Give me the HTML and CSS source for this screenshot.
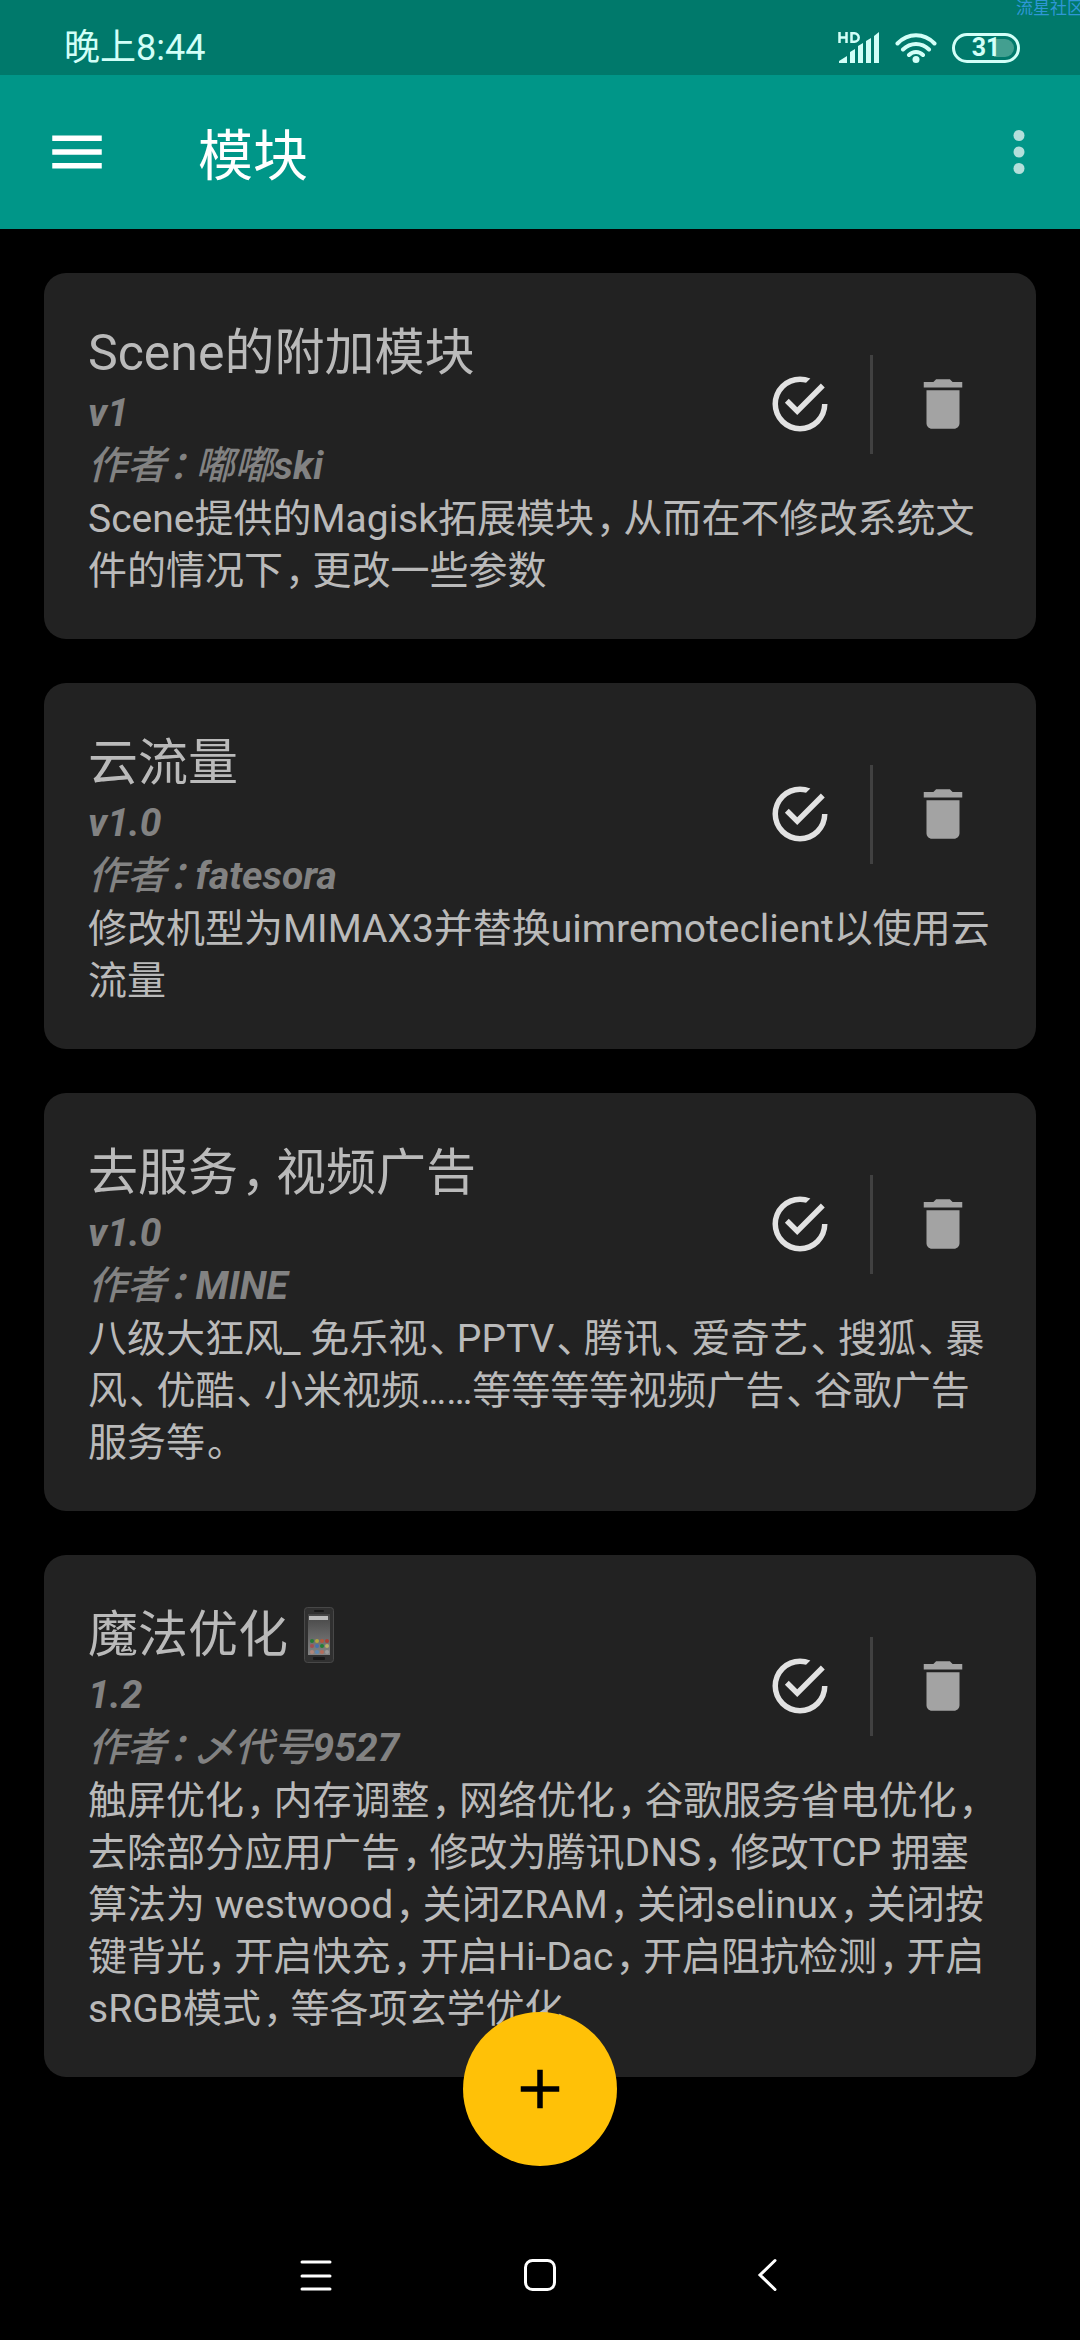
FILE: index.html
```html
<!DOCTYPE html>
<html lang="zh-CN">
<head>
<meta charset="utf-8">
<meta name="viewport" content="width=device-width, initial-scale=1">
<title>模块</title>
<link rel="stylesheet" href="styles.css">
</head>
<body>
<svg class="defs" aria-hidden="true">
  <symbol id="check" viewBox="0 0 24 24"><path d="M20,12A8,8 0 0,1 12,20A8,8 0 0,1 4,12A8,8 0 0,1 12,4C12.76,4 13.5,4.11 14.2,4.31L15.77,2.74C14.61,2.26 13.34,2 12,2A10,10 0 0,0 2,12A10,10 0 0,0 12,22A10,10 0 0,0 22,12M7.91,10.08L6.5,11.5L11,16L21,6L19.59,4.58L11,13.17L7.91,10.08Z"/></symbol>
  <symbol id="trash" viewBox="0 0 24 24"><path d="M6 19c0 1.100.900 2 2 2h8c1.100 0 2-.900 2-2V7H6v12zM19 4h-3.500l-1-1h-5l-1 1H5v2h14V4z"/></symbol>
</svg>
<div class="app">
  <div class="status">
    <span class="clock">晚上8:44</span>
    <div class="indicators">
      <svg class="signal" viewBox="0 0 42 32" role="img" aria-label="HD 信号">
        <path class="hd" d="M1.500 0v11M8.500 0v11M1.500 5.500h7M13.500 1.300v8.400h3a4.200 4.200 0 0 0 0-8.400z"/>
        <path d="M1 31v-2l8-5v7zM12 31V20l5-3v14zM20 31V14l5-3v20zM28 31V9l5-3v25zM36 31V4l5-4v31z"/>
      </svg>
      <svg class="wifi" viewBox="0 0 42 30" role="img" aria-label="Wi-Fi">
        <path d="M2.500 10.500C13-.500 29-.500 39.500 10.500M8 16.500c7.500-7.500 18.500-7.500 26 0M14 22c4-4 10-4 14 0"/>
        <circle cx="21" cy="26.500" r="3.500"/>
      </svg>
      <div class="battery"><span class="level">31</span></div>
    </div>
    <span class="watermark">流星社区</span>
  </div>
  <header class="bar">
    <button class="icon-button" aria-label="菜单"><svg class="icon" viewBox="0 0 24 24"><path d="M3 18h18v-2H3v2zm0-5h18v-2H3v2zm0-7v2h18V6H3z"/></svg></button>
    <h1 class="bar-title">模块</h1>
    <button class="icon-button more" aria-label="更多"><svg class="icon" viewBox="0 0 24 24"><circle cx="12" cy="6" r="2"/><circle cx="12" cy="12" r="2"/><circle cx="12" cy="18" r="2"/></svg></button>
  </header>
  <main class="modules">
    <article class="card">
      <div class="card-head">
        <div class="info">
          <h2 class="name">Scene的附加模块</h2>
          <p class="meta">v1</p>
          <p class="meta"><span class="han">作者<span class="mark">：</span>嘟嘟</span>ski</p>
        </div>
        <label class="action toggle"><input class="toggle-input" type="checkbox" checked aria-label="启用"><svg class="icon"><use href="#check"/></svg></label>
        <span class="divider"></span>
        <button class="action remove" aria-label="删除"><svg class="icon"><use href="#trash"/></svg></button>
      </div>
      <p class="desc">Scene提供的Magisk拓展模块<span class="mark">，</span>从而在不修改系统文件的情况下<span class="mark">，</span>更改一些参数</p>
    </article>
    <article class="card">
      <div class="card-head">
        <div class="info">
          <h2 class="name">云流量</h2>
          <p class="meta">v1.0</p>
          <p class="meta"><span class="han">作者<span class="mark">：</span></span>fatesora</p>
        </div>
        <label class="action toggle"><input class="toggle-input" type="checkbox" checked aria-label="启用"><svg class="icon"><use href="#check"/></svg></label>
        <span class="divider"></span>
        <button class="action remove" aria-label="删除"><svg class="icon"><use href="#trash"/></svg></button>
      </div>
      <p class="desc">修改机型为MIMAX3并替换uimremoteclient以使用云流量</p>
    </article>
    <article class="card">
      <div class="card-head">
        <div class="info">
          <h2 class="name">去服务<span class="mark">，</span>视频广告</h2>
          <p class="meta">v1.0</p>
          <p class="meta"><span class="han">作者<span class="mark">：</span></span>MINE</p>
        </div>
        <label class="action toggle"><input class="toggle-input" type="checkbox" checked aria-label="启用"><svg class="icon"><use href="#check"/></svg></label>
        <span class="divider"></span>
        <button class="action remove" aria-label="删除"><svg class="icon"><use href="#trash"/></svg></button>
      </div>
      <p class="desc">八级大狂风_ 免乐视<span class="mark">、</span>PPTV<span class="mark">、</span>腾讯<span class="mark">、</span>爱奇艺<span class="mark">、</span>搜狐<span class="mark">、</span>暴风<span class="mark">、</span>优酷<span class="mark">、</span>小米视频……等等等等视频广告<span class="mark">、</span>谷歌广告服务等<span class="mark">。</span></p>
    </article>
    <article class="card">
      <div class="card-head">
        <div class="info">
          <h2 class="name">魔法优化<svg class="phone" viewBox="0 0 30 56" role="img" aria-label="手机">
            <defs><linearGradient id="screen" x1="0" y1="0" x2="0" y2="1"><stop offset="0" stop-color="#444"/><stop offset="1" stop-color="#858585"/></linearGradient></defs>
            <rect x=".500" y=".500" width="29" height="55" rx="3" fill="#303030" stroke="#484848"/>
            <rect x="4" y="7" width="22" height="41" fill="url(#screen)"/>
            <rect x="10" y="3" width="10" height="2" rx="1" fill="#191919"/>
            <rect x="5" y="9" width="19" height="4" fill="#bbb"/>
            <g><circle cx="8" cy="34" r="2" fill="#287a38"/><circle cx="13" cy="34" r="2" fill="#b4a541"/><circle cx="18" cy="34" r="2" fill="#b5573c"/><circle cx="23" cy="34" r="2" fill="#a83f36"/>
            <circle cx="8" cy="39" r="2" fill="#a24e52"/><circle cx="13" cy="39" r="2" fill="#4770ad"/><circle cx="18" cy="39" r="2" fill="#217f38"/><circle cx="23" cy="39" r="2" fill="#b9ae69"/>
            <circle cx="8" cy="45" r="2" fill="#b28679"/><circle cx="13" cy="45" r="2" fill="#5e87b0"/><circle cx="18" cy="45" r="2" fill="#b46c5a"/><circle cx="23" cy="45" r="2" fill="#9a9a9a"/></g>
            <rect x="9" y="50" width="12" height="3" rx="1" fill="#191919"/>
          </svg></h2>
          <p class="meta">1.2</p>
          <p class="meta"><span class="han">作者<span class="mark">：</span>乄代号</span>9527</p>
        </div>
        <label class="action toggle"><input class="toggle-input" type="checkbox" checked aria-label="启用"><svg class="icon"><use href="#check"/></svg></label>
        <span class="divider"></span>
        <button class="action remove" aria-label="删除"><svg class="icon"><use href="#trash"/></svg></button>
      </div>
      <p class="desc">触屏优化<span class="mark">，</span>内存调整<span class="mark">，</span>网络优化<span class="mark">，</span>谷歌服务省电优化<span class="mark">，</span>去除部分应用广告<span class="mark">，</span>修改为腾讯DNS<span class="mark">，</span>修改TCP 拥塞算法为 westwood<span class="mark">，</span>关闭ZRAM<span class="mark">，</span>关闭selinux<span class="mark">，</span>关闭按键背光<span class="mark">，</span>开启快充<span class="mark">，</span>开启Hi-Dac<span class="mark">，</span>开启阻抗检测<span class="mark">，</span>开启sRGB模式<span class="mark">，</span>等各项玄学优化</p>
    </article>
  </main>
  <nav class="system-nav">
    <button class="nav-button" aria-label="最近任务"><svg class="nav-icon" viewBox="0 0 36 36"><path d="M5 5h28M5 19h28M5 32h28"/></svg></button>
    <button class="nav-button" aria-label="主屏幕"><svg class="nav-icon" viewBox="0 0 36 36"><rect x="3.500" y="3.500" width="29" height="29" rx="7"/></svg></button>
    <button class="nav-button" aria-label="返回"><svg class="nav-icon" viewBox="0 0 36 36"><path d="M28 3.500 13 18l15 14.500"/></svg></button>
  </nav>
</div>
<button class="fab" aria-label="添加"><svg class="icon" viewBox="0 0 24 24"><path d="M19 13h-6v6h-2v-6H5v-2h6V5h2v6h6v2z"/></svg></button>
</body>
</html>
```
FILE: styles.css
```css
* { box-sizing: border-box; }

body {
  margin: 0;
  background: #000;
  color: #bababa;
  font-family: Roboto, "Noto Sans CJK SC", sans-serif;
  font-size: 39px;
  line-height: 52px;
}

h1, h2, p { margin: 0; font-weight: 400; }

button {
  margin: 0;
  padding: 0;
  border: 0;
  background: none;
  color: inherit;
  font: inherit;
}

svg { display: block; flex: none; }

.defs { position: absolute; width: 0; height: 0; }

.icon { width: 66px; height: 66px; fill: currentColor; }

.app { display: flex; flex-direction: column; min-height: 100vh; }

/* Status bar */
.status {
  position: relative;
  display: flex;
  align-items: center;
  justify-content: space-between;
  height: 75px;
  padding: 20px 60px 0 64px;
  overflow: hidden;
  background: #00796b;
  color: #d2fff8;
}

.clock { font-size: 36px; }

.indicators { display: flex; align-items: center; gap: 15px; }

.signal { width: 42px; height: 32px; fill: currentColor; }
.hd { fill: none; stroke: currentColor; stroke-width: 2.5; }

.wifi { width: 42px; height: 30px; fill: currentColor; }
.wifi path { fill: none; stroke: currentColor; stroke-width: 4; stroke-linecap: round; }

.battery {
  width: 68px;
  height: 30px;
  padding: 3px;
  border: 3px solid currentColor;
  border-radius: 15px;
}

.level {
  display: block;
  border-radius: 9px;
  background: linear-gradient(90deg, transparent 65%, #439f90 65%);
  font-size: 25px;
  font-weight: 700;
  line-height: 18px;
  text-align: center;
}

.watermark {
  position: absolute;
  top: 0;
  right: -4px;
  color: #2f97d6;
  font-size: 17px;
  line-height: 17px;
}

/* App bar */
.bar {
  display: flex;
  align-items: center;
  height: 154px;
  padding: 0 28px 0 44px;
  background: #009688;
  color: #fff;
}

.bar-title { flex: 1; padding: 8px 0 0 88px; font-size: 55px; line-height: 72px; }

.more { color: #b3dfdb; }

/* Module list */
.modules {
  display: flex;
  flex: 1;
  flex-direction: column;
  gap: 44px;
  padding: 44px;
}

.card { padding: 46px 44px 42px; border-radius: 22px; background: #222; }

.card-head { display: flex; align-items: center; gap: 21px; }

.info { flex: 1; }

.name { display: flex; align-items: center; font-size: 50px; line-height: 68px; }

.phone { width: 30px; height: 56px; margin-left: 16px; }

.meta { color: #828282; font-style: italic; font-weight: 700; line-height: 53px; }

.han { font-weight: 500; }

/* Half-width punctuation with a little room after it */
.mark { padding: 0 8px 0 2px; font-feature-settings: "halt"; }
.name .mark { padding: 0 10px 0 3px; }

.action, .divider { margin-bottom: 4px; }

.action { position: relative; display: grid; place-items: center; width: 98px; height: 98px; }

.toggle { color: #e2e2e2; }
.toggle-input { position: absolute; inset: 0; width: 100%; height: 100%; margin: 0; opacity: 0; }

.remove { color: #a3a3a3; }

.divider { width: 3px; height: 99px; background: #414141; }

/* Floating button */
.fab {
  position: fixed;
  bottom: 174px;
  left: 50%;
  display: grid;
  place-items: center;
  width: 154px;
  height: 154px;
  margin-left: -77px;
  border-radius: 50%;
  background: #ffc107;
  color: #000;
}

/* System navigation */
.system-nav { display: flex; justify-content: center; height: 130px; }

.nav-button { display: grid; place-items: center; width: 225px; }

.nav-icon { width: 36px; height: 36px; fill: none; stroke: #fff; stroke-width: 3; stroke-linecap: round; }
```
